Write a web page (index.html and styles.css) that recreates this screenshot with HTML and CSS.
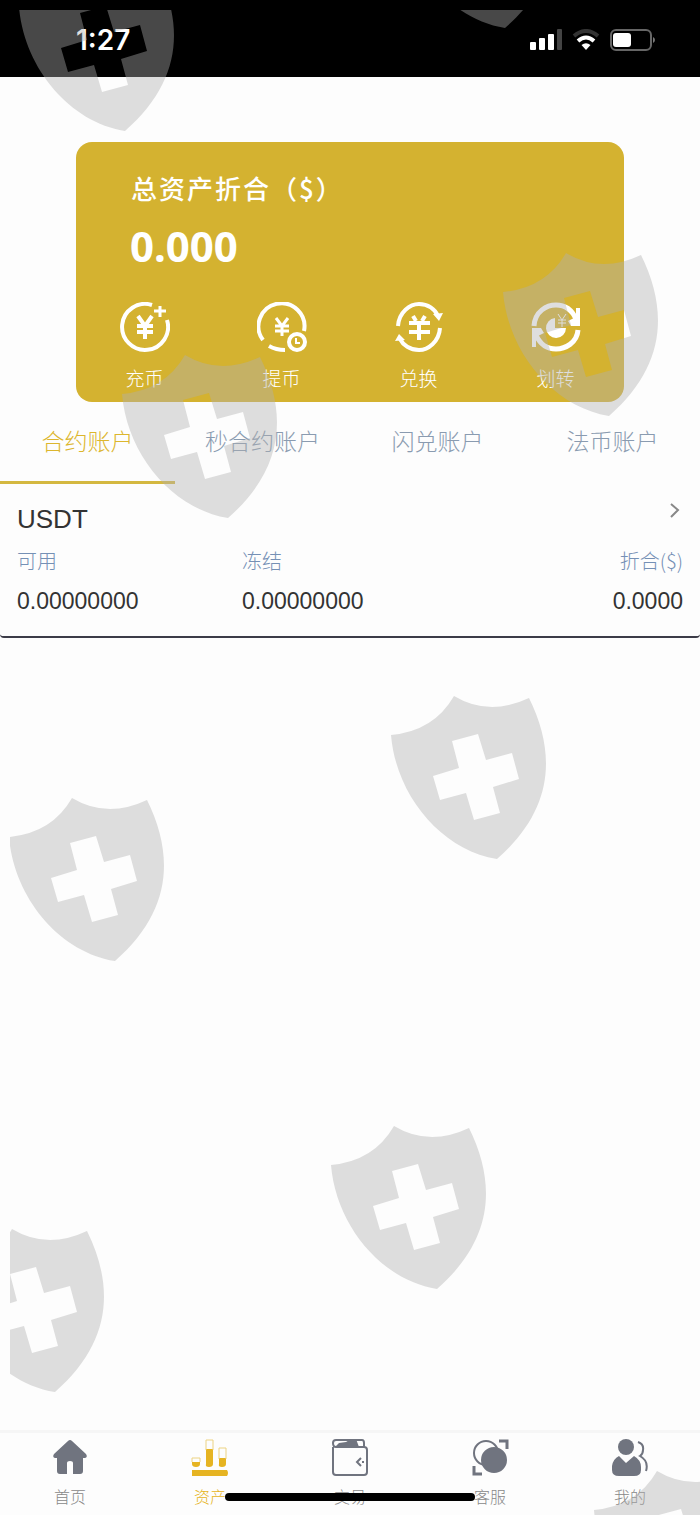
FILE: index.html
```
<!DOCTYPE html>
<html lang="zh-CN">
  <head>
    <meta charset="UTF-8" />
    <meta name="viewport" content="width=device-width, initial-scale=1.0" />
    <title>资产</title>
    <link rel="stylesheet" href="styles.css">
  </head>
  <body>
    <header class="status-bar">
      <span class="time">1:27</span>
      <div class="status-icons">
        <svg width="32" height="22" viewBox="0 0 32 22" fill="#fff">
          <rect x="0" y="13" width="6" height="8" rx="1" />
          <rect x="9" y="9" width="6" height="12" rx="1" />
          <rect x="18" y="5" width="6" height="16" rx="1" />
          <rect x="27" y="0" width="5" height="21" rx="1" fill="#444" />
        </svg>
        <svg width="28" height="22" viewBox="0 0 28 22" fill="none">
          <path d="M2 7Q14-3 26 7" stroke="#333" stroke-width="4" />
          <path d="M6 12Q14 5 22 12" stroke="#fff" stroke-width="4" />
          <path d="M14 21L9.500 16Q14 12.500 18.500 16Z" fill="#fff" />
        </svg>
        <svg width="46" height="22" viewBox="0 0 46 22" fill="none">
          <rect x="1" y="1" width="40" height="20" rx="5" stroke="#666" stroke-width="2" />
          <rect x="3" y="4" width="18" height="14" rx="3" fill="#fff" />
          <path d="M43 8Q45 9 45 11T43 14Z" fill="#777" />
        </svg>
      </div>
    </header>

    <main>
      <section class="card">
        <h1>总资产折合（$）</h1>
        <p class="total">0.000</p>
        <nav class="actions">
          <a href="#">
            <svg viewBox="0 0 50 50">
              <path d="M32 3A23 23 0 1 0 47 18" />
              <path d="M40 4V15M34 9H46" stroke-width="3" />
              <path d="M18 14L25 24L32 14M25 24V37M17 24H33M17 30H33" />
            </svg>
            充币
          </a>
          <a href="#">
            <svg viewBox="0 0 50 50">
              <path d="M6 38A23 23 0 1 1 47 29M12 44Q19 48 28 48" />
              <path d="M19 16L25 24L31 16M25 24V34M18 24H32M18 29H32" stroke-width="3" />
              <circle cx="40" cy="40" r="8" />
              <path d="M39 36V41H43" stroke-width="2" />
            </svg>
            提币
          </a>
          <a href="#">
            <svg viewBox="0 0 50 50">
              <path d="M4 24C5 10 16 2 25 2C34 2 41 7 44 14M46 26C45 40 34 48 25 48C16 48 9 43 6 37" />
              <path d="M39 12L49 11L45 19ZM1 39L5 32L11 38Z" fill="#fff" stroke="none" />
              <path d="M19 14L22 19M31 14L28 19M15 21H36M15 30H36M25 20V38" />
            </svg>
            兑换
          </a>
          <a href="#">
            <svg viewBox="0 0 50 50">
              <path d="M3 24C4 9 16 3 25 3C34 3 41 8 45 17M47 28C46 41 34 47 25 47C16 47 9 42 5 33" stroke-width="5" />
              <path d="M37 19L45 15V6H49V24H40ZM1 45V26H10L13 31L5 35V45Z" fill="#fff" stroke="none" />
              <path d="M24 16V26H35A10 10 0 1 1 24 16Z" fill="#fff" stroke="none" />
              <path d="M27 12L31 18L35 12M31 18V25M27 18H35M27 21H35" stroke-width="1" />
            </svg>
            划转
          </a>
        </nav>
      </section>

      <div class="tabs">
        <button type="button" class="active">合约账户</button>
        <button type="button">秒合约账户</button>
        <button type="button">闪兑账户</button>
        <button type="button">法币账户</button>
      </div>

      <a class="account" href="#">
        <div class="account-head">
          <h2>USDT</h2>
          <svg width="14" height="20" viewBox="0 0 14 20">
            <path d="M2 4L9 10L2 17" fill="none" stroke="#888" stroke-width="2" />
          </svg>
        </div>
        <dl>
          <div><dt>可用</dt><dd>0.00000000</dd></div>
          <div><dt>冻结</dt><dd>0.00000000</dd></div>
          <div><dt>折合($)</dt><dd>0.0000</dd></div>
        </dl>
      </a>
    </main>

    <nav class="tab-bar">
      <a href="#">
        <svg viewBox="0 0 38 38" fill="#70747f">
          <path d="M17 3Q19 1 21 3L35 16Q37 19 34 20H32V33Q32 36 29 36H22V25Q22 23 19 23T16 25V36H9Q6 36 6 33V20H4Q1 19 3 16Z" />
        </svg>
        首页
      </a>
      <a href="#" class="active">
        <svg viewBox="0 0 38 38" fill="#e6b422">
          <path d="M1 32H36Q38 35 36 38H1Z" />
          <path d="M1 24H9V26Q9 29 5 29T1 26ZM15 11H22V26Q22 29 18 29T15 26ZM28 20H35V26Q35 29 31 29T28 26Z" />
          <path d="M1 24V20H9V24M15 12V2H22V12M28 21V10H35V21" fill="none" stroke="#ecd383" />
        </svg>
        资产
      </a>
      <a href="#">
        <svg viewBox="0 0 38 38" fill="none" stroke="#70747f" stroke-width="2">
          <path d="M2 9V34Q2 37 5 37H33Q36 37 36 34V12Q36 9 33 9H5Q2 9 2 5Q2 2 5 2H31Q33 2 33 5V9" />
          <path d="M4 9L8 5L15 4L20 1H25L28 9Z" fill="#70747f" stroke="none" />
          <path d="M30 20L26 24L30 28M32 23V25" />
        </svg>
        交易
      </a>
      <a href="#">
        <svg viewBox="0 0 38 38" fill="none" stroke="#70747f" stroke-width="2">
          <circle cx="15" cy="15" r="12" />
          <circle cx="23" cy="22" r="12" fill="#70747f" />
          <path d="M28 3H36V11M3 28V36H11" stroke-width="3" />
        </svg>
        客服
      </a>
      <a href="#">
        <svg viewBox="0 0 38 38" fill="#70747f">
          <circle cx="15" cy="9" r="8" />
          <path d="M8 18L15 25L23 18Q30 22 30 29V32Q30 38 23 38H8Q1 38 1 32V28Q2 21 8 18Z" />
          <path d="M27 4Q33 6 32 12Q32 16 29 18Q38 23 35 33" fill="none" stroke="#70747f" stroke-width="2" />
        </svg>
        我的
      </a>
      <span class="home-indicator"></span>
    </nav>

    <!-- shield watermark over the whole page -->
    <svg class="watermark" aria-hidden="true">
      <defs>
        <path id="shield" fill-rule="evenodd" d="M0 40Q43 36 63 1Q98 22 138 3C166 60 162 115 106 164C50 155 5 100 0 40ZM61 46L68 73L42 81L49 105L75 98L83 125L109 118L102 92L128 84L121 58L95 65L87 39Z" />
      </defs>
      <use href="#shield" x="9" y="-43" />
      <use href="#shield" x="389" y="-146" />
      <use href="#shield" x="493" y="242" />
      <use href="#shield" x="112" y="344" />
      <use href="#shield" x="381" y="685" />
      <use href="#shield" x="-1" y="787" />
      <use href="#shield" x="321" y="1115" />
      <use href="#shield" x="-61" y="1218" />
      <use href="#shield" x="584" y="1460" />
    </svg>
  </body>
</html>
```
FILE: styles.css
```
* {
  box-sizing: border-box;
  margin: 0;
  padding: 0;
}

body {
  position: relative;
  display: flex;
  flex-direction: column;
  min-height: 100vh;
  font-family: "Noto Sans CJK SC", sans-serif;
  font-weight: 300;
  color: #333;
  background-color: #fdfdfd;
}

a {
  color: inherit;
  text-decoration: none;
}

.status-bar {
  display: flex;
  justify-content: space-between;
  align-items: center;
  padding: 24px 44px 21px 76px;
  background-color: #000;
  color: #fff;
}

.time {
  font-family: Inter, sans-serif;
  font-size: 28px;
  font-weight: 600;
  line-height: 32px;
}

.status-icons {
  display: flex;
  align-items: center;
  gap: 10px;
}

.card {
  margin: 65px 76px 0;
  padding: 28px 0 12px;
  border-radius: 16px;
  background-color: #d4b230;
  color: #fff;
}

.card h1 {
  padding-left: 55px;
  font-size: 26px;
  font-weight: 500;
  line-height: 36px;
  letter-spacing: 2px;
}

.total {
  padding-left: 54px;
  margin-top: 12px;
  font-family: "Noto Sans", sans-serif;
  font-size: 42px;
  font-weight: 700;
  line-height: 56px;
}

.actions {
  display: grid;
  grid-template-columns: repeat(4, 1fr);
  margin-top: 28px;
}

.actions a {
  display: flex;
  flex-direction: column;
  align-items: center;
  gap: 14px;
  font-size: 19px;
  line-height: 24px;
}

.actions svg {
  width: 50px;
  height: 50px;
  fill: none;
  stroke: #fff;
  stroke-width: 4;
}

.tabs {
  display: grid;
  grid-template-columns: repeat(4, 1fr);
}

.tabs button {
  padding: 22px 0 25px;
  border: none;
  border-bottom: 3px solid transparent;
  background: none;
  color: #8a9bb0;
  font-family: inherit;
  font-size: 23px;
  font-weight: 300;
  line-height: 32px;
  cursor: pointer;
}

.tabs .active {
  border-color: #d4b840;
  color: #dcb62e;
}

.account {
  display: block;
  padding: 16px 17px 19px;
  border-bottom: 2px solid #3c3c48;
  border-radius: 4px;
}

.account-head {
  display: flex;
  justify-content: space-between;
}

.account h2,
.account dd {
  font-family: "Liberation Sans", sans-serif;
  font-weight: 400;
}

.account h2 {
  font-size: 26px;
  line-height: 38px;
}

.account dl {
  display: grid;
  grid-template-columns: repeat(3, 1fr);
  gap: 9px;
  margin-top: 8px;
}

.account dl div:last-child {
  text-align: right;
}

.account dt {
  color: #7590b5;
  font-size: 20px;
  line-height: 30px;
}

.account dd {
  margin-top: 9px;
  font-size: 23px;
  line-height: 32px;
}

.tab-bar {
  position: relative;
  display: grid;
  grid-template-columns: repeat(5, 1fr);
  margin-top: auto;
  padding: 5px 0 7px;
  border-top: 3px solid #f6f6f6;
}

.tab-bar a {
  display: flex;
  flex-direction: column;
  align-items: center;
  gap: 8px;
  color: #888;
  font-size: 16px;
  line-height: 24px;
}

.tab-bar svg {
  width: 38px;
  height: 38px;
}

.tab-bar .active {
  color: #e6b422;
}

.home-indicator {
  position: absolute;
  bottom: 14px;
  left: 50%;
  width: 250px;
  height: 8px;
  border-radius: 4px;
  background-color: #000;
  transform: translateX(-50%);
}

.watermark {
  position: absolute;
  top: 10px;
  left: 10px;
  width: calc(100% - 10px);
  height: calc(100% - 10px);
  overflow: hidden;
  fill: #b0b0b0;
  opacity: 0.41;
  pointer-events: none;
}
```
